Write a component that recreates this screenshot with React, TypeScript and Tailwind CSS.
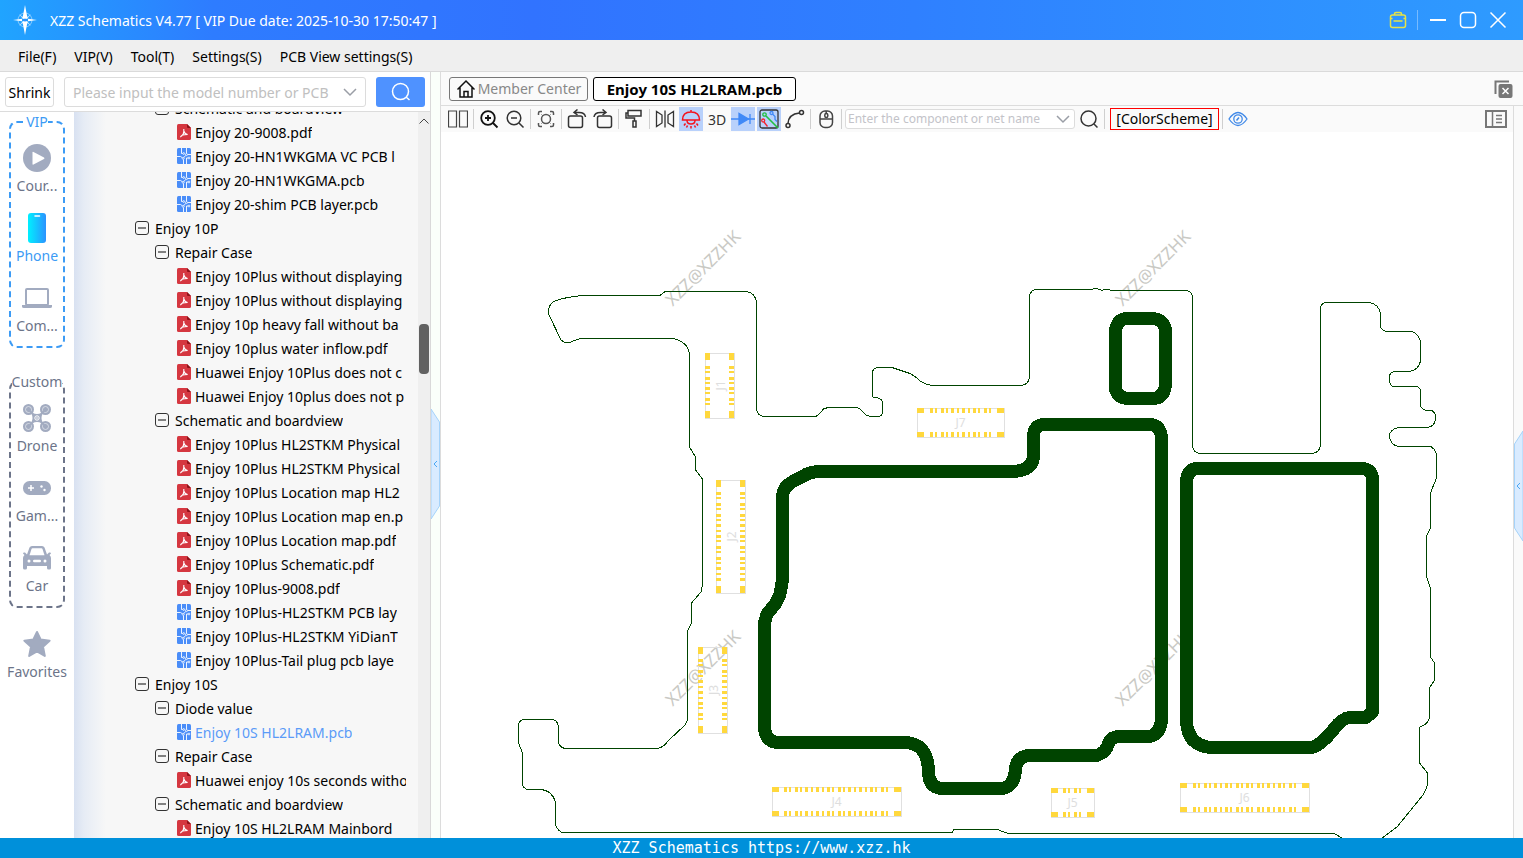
import { useState, type ReactNode } from 'react';
import { clsx } from 'clsx';

type NodeKind = 'folder' | 'pdf' | 'pcb';

interface TreeNode {
  label: string;
  level: 0 | 1 | 2;
  kind: NodeKind;
}

interface Connector {
  name: string;
  x: number;
  y: number;
  w: number;
  h: number;
  pins: number;
  first: number;
  last: number;
}

const MENUS = ['File(F)', 'VIP(V)', 'Tool(T)', 'Settings(S)', 'PCB View settings(S)'];

const TREE: TreeNode[] = [
  { label: 'Schematic and boardview', level: 1, kind: 'folder' },
  { label: 'Enjoy 20-9008.pdf', level: 2, kind: 'pdf' },
  { label: 'Enjoy 20-HN1WKGMA VC PCB l', level: 2, kind: 'pcb' },
  { label: 'Enjoy 20-HN1WKGMA.pcb', level: 2, kind: 'pcb' },
  { label: 'Enjoy 20-shim PCB layer.pcb', level: 2, kind: 'pcb' },
  { label: 'Enjoy 10P', level: 0, kind: 'folder' },
  { label: 'Repair Case', level: 1, kind: 'folder' },
  { label: 'Enjoy 10Plus without displaying', level: 2, kind: 'pdf' },
  { label: 'Enjoy 10Plus without displaying', level: 2, kind: 'pdf' },
  { label: 'Enjoy 10p heavy fall without ba', level: 2, kind: 'pdf' },
  { label: 'Enjoy 10plus water inflow.pdf', level: 2, kind: 'pdf' },
  { label: 'Huawei Enjoy 10Plus does not c', level: 2, kind: 'pdf' },
  { label: 'Huawei Enjoy 10plus does not p', level: 2, kind: 'pdf' },
  { label: 'Schematic and boardview', level: 1, kind: 'folder' },
  { label: 'Enjoy 10Plus HL2STKM Physical', level: 2, kind: 'pdf' },
  { label: 'Enjoy 10Plus HL2STKM Physical', level: 2, kind: 'pdf' },
  { label: 'Enjoy 10Plus Location map HL2', level: 2, kind: 'pdf' },
  { label: 'Enjoy 10Plus Location map en.p', level: 2, kind: 'pdf' },
  { label: 'Enjoy 10Plus Location map.pdf', level: 2, kind: 'pdf' },
  { label: 'Enjoy 10Plus Schematic.pdf', level: 2, kind: 'pdf' },
  { label: 'Enjoy 10Plus-9008.pdf', level: 2, kind: 'pdf' },
  { label: 'Enjoy 10Plus-HL2STKM PCB lay', level: 2, kind: 'pcb' },
  { label: 'Enjoy 10Plus-HL2STKM YiDianT', level: 2, kind: 'pcb' },
  { label: 'Enjoy 10Plus-Tail plug pcb laye', level: 2, kind: 'pcb' },
  { label: 'Enjoy 10S', level: 0, kind: 'folder' },
  { label: 'Diode value', level: 1, kind: 'folder' },
  { label: 'Enjoy 10S HL2LRAM.pcb', level: 2, kind: 'pcb' },
  { label: 'Repair Case', level: 1, kind: 'folder' },
  { label: 'Huawei enjoy 10s seconds witho', level: 2, kind: 'pdf' },
  { label: 'Schematic and boardview', level: 1, kind: 'folder' },
  { label: 'Enjoy 10S HL2LRAM Mainbord', level: 2, kind: 'pdf' },
];

const CONNECTORS: Connector[] = [
  { name: 'J1', x: 705, y: 353, w: 29, h: 65, pins: 8, first: 367, last: 404 },
  { name: 'J2', x: 716, y: 480, w: 29, h: 113, pins: 17, first: 493, last: 579 },
  { name: 'J3', x: 698, y: 647, w: 29, h: 86, pins: 12, first: 660, last: 719 },
  { name: 'J4', x: 772, y: 787, w: 129, h: 29, pins: 20, first: 785, last: 887 },
  { name: 'J5', x: 1051, y: 788, w: 43, h: 29, pins: 4, first: 1064, last: 1080 },
  { name: 'J6', x: 1180, y: 783, w: 129, h: 29, pins: 20, first: 1194, last: 1295 },
  { name: 'J7', x: 917, y: 408, w: 87, h: 29, pins: 12, first: 931, last: 990 },
];

const WATERMARKS = [
  [703, 268],
  [1153, 268],
  [703, 668],
  [1153, 668],
];

const OUTLINE =
  'M582 295.5H660L665 291.5H746Q756 293 756.5 303V410Q758 416 764 416.5H816Q820 414 824 408.5L829 407.5H857Q861 409 866 415L871 416.5H878Q882 416 882.5 413V402Q882 398 873 397L872.5 395V374Q872 369 877 367.5H892L907 372.5Q913 374 920 381Q926 385 932 385.5H1021Q1028 385 1029.5 378V297Q1030 289 1038 289.5H1090L1097 288.5L1102 290.5L1105 289L1113 290.5H1186Q1192 291 1192.5 298V447Q1194 453 1200 453.5H1313Q1320 452 1320.5 445V308Q1321 303 1327 302.5H1369Q1379 304 1380.5 314V327Q1382 331 1387 331.5H1412Q1419 334 1420.5 342V361Q1419 370 1409 371.5H1394Q1389 373 1389.5 378Q1389 386 1394 386.5H1416Q1420 387 1420.5 391V406Q1422 410 1427 410.5H1432Q1436 413 1435.5 419Q1435 426 1428 427.5H1398Q1389 430 1389.5 437Q1391 445 1398 446.5H1431Q1435 449 1436.5 454V478L1432 489L1430.5 493V528L1426.5 536V577L1430.5 588V657L1434.5 663V680L1429.5 688V718Q1427 725 1420 727L1419.5 763L1427.5 773V783Q1427 788 1423 795L1397 827L1381 839M1344 839L1334 833.5H1009L1001 831L998 829.5H954L952 832.5H562Q556 829 555.5 824V802Q552 790 540 789.5H527Q522 787 522.5 783V753L518.5 743V726Q519 720 524 719.5H550Q558 719 558.5 727V743Q560 748 566 748.5H658Q664 747 668 741L685 725L687.5 720V631L691.5 623V603L701 592L702.5 585V479L695.5 470V457L689.5 447V354Q688 342 673 338.5H580L568 343Q564 343 561 340L549 315Q547 307 553 302Q560 298 582 295.5';

const SHIELDS = [
  'M1127 318.5H1153Q1165.5 320 1165.5 332V385Q1164 398 1153 398.5H1127Q1115.5 397 1115 385V332Q1117 319 1127 318.5Z',
  'M820 471.5H1014Q1033 470 1033.5 456V436Q1034 425 1044 424.5H1150Q1160 425 1161.5 437V720Q1160 735 1149 736.5H1119Q1110 737 1108 745Q1106 752 1097 755.5H1030Q1016 756 1015.5 770Q1014 787 1002 788.5H941Q929 787 928.5 772Q928 743 905 742.5H777Q765 741 764.5 727V623L767 614L776 603L780 594L782.5 580V496Q783 487 792 482L806 474.5Q812 471.5 820 471.5Z',
  'M1196 468.5H1364Q1371 470 1372.5 477V712L1366 717.5H1350Q1342 718 1334 729Q1321 745 1312 747.5H1210Q1188 745 1186.5 722V482Q1187 470 1196 468.5Z',
];

function Icon({ size = 20, className, children }: { size?: number; className?: string; children: ReactNode }) {
  return (
    <svg
      width={size}
      height={size}
      viewBox="0 0 20 20"
      fill="none"
      stroke="currentColor"
      strokeWidth="1.5"
      className={clsx('shrink-0', className)}
      aria-hidden="true"
    >
      {children}
    </svg>
  );
}

const ChevronDown = () => (
  <svg width="14" height="14" viewBox="0 0 14 14" fill="none" stroke="#9a9ea6" strokeWidth="1.5" aria-hidden="true">
    <path d="M1 4l6 6 6-6" />
  </svg>
);

function TitleBar() {
  return (
    <header className="flex h-10 shrink-0 items-center bg-[linear-gradient(90deg,#20a4ff_0%,#2e7cff_14%,#3173ff_35%,#2f80ff_60%,#2e9bff_100%)] pr-[15px] pl-3 text-white">
      <svg width="26" height="30" viewBox="0 0 26 30" fill="white" aria-hidden="true">
        <circle cx="13" cy="15" r="7" fill="none" stroke="white" strokeOpacity="0.45" />
        <path d="M13 0l1.500 8 1.200 5.500-2.700.8-2.700-.8L11.500 8zM13 30l1.500-8 1.200-5.500-2.700-.8-2.700.8L11.500 22z" />
        <path d="M1 15l9-1.300v2.600zM25 15l-9-1.300v2.600z" />
        <path d="M7 9l4.500 3.500-1 1zM19 9l-4.500 3.500 1 1zM7 21l4.500-3.500-1-1zM19 21l-4.500-3.500 1-1z" fillOpacity="0.7" />
        <circle cx="13" cy="15" r="1.5" fill="#2e90ff" />
      </svg>
      <h1 className="ml-3 whitespace-pre">XZZ Schematics V4.77 [ VIP Due date: 2025-10-30 17:50:47 ]</h1>
      <div className="ml-auto flex items-center gap-2.5">
        <button type="button" aria-label="Toolbox" className="text-[#e6e346]">
          <svg width="18" height="18" viewBox="0 0 18 18" fill="none" stroke="currentColor" strokeWidth="1.5" aria-hidden="true">
            <rect x="1.5" y="4" width="15" height="12.5" rx="2" />
            <path d="M5.500 4V3q0-1.500 1.500-1.500h4q1.500 0 1.500 1.500v1M1.500 7.500h2M14.500 7.500h2M4.500 10h9" />
          </svg>
        </button>
        <span className="h-5 w-px bg-white/35" />
        <button type="button" aria-label="Minimize">
          <Icon><path d="M2 10h16" strokeWidth="2" /></Icon>
        </button>
        <button type="button" aria-label="Maximize">
          <Icon><rect x="2.5" y="2.5" width="15" height="15" rx="3.5" /></Icon>
        </button>
        <button type="button" aria-label="Close">
          <Icon><path d="M2.500 2.500l15 15M17.500 2.500l-15 15" /></Icon>
        </button>
      </div>
    </header>
  );
}

function MenuBar() {
  return (
    <nav className="flex h-8 shrink-0 items-center gap-[18px] border-b border-[#dadada] bg-[#efefef] px-[18px] pt-0.5">
      {MENUS.map(menu => (
        <button key={menu} type="button" className="whitespace-nowrap">
          {menu}
        </button>
      ))}
    </nav>
  );
}

const CATEGORY_ICONS: Record<string, ReactNode> = {
  course: (
    <svg width="28" height="28" viewBox="0 0 28 28" aria-hidden="true">
      <circle cx="14" cy="14" r="14" fill="#a2abc0" />
      <path d="M9.500 8.500v11.500q0 1 1 .5L21 15q1-.7 0-1.400L10.500 8q-1-.5-1 .5z" fill="#fff" />
    </svg>
  ),
  phone: (
    <svg width="18" height="30" viewBox="0 0 18 30" aria-hidden="true">
      <defs>
        <linearGradient id="phone" x1="0" x2="1">
          <stop offset="0" stopColor="#00f0ff" />
          <stop offset="1" stopColor="#2b93ff" />
        </linearGradient>
      </defs>
      <rect width="18" height="30" rx="3" fill="url(#phone)" />
      <path d="M7 3h4.500" stroke="#fff" strokeWidth="1.5" strokeLinecap="round" />
    </svg>
  ),
  computer: (
    <svg width="30" height="22" viewBox="0 0 30 22" aria-hidden="true">
      <rect x="4" y="2" width="22" height="16" rx="1" fill="none" stroke="#a2abc0" strokeWidth="2" />
      <path d="M0 18h12v1h6v-1h12v1.500q0 1.500-2 1.500H2q-2 0-2-1.500z" fill="#a2abc0" />
    </svg>
  ),
  drone: (
    <svg width="28" height="28" viewBox="0 0 28 28" fill="#a2abc0" aria-hidden="true">
      <circle cx="5.5" cy="5.5" r="5.5" />
      <circle cx="22.5" cy="5.5" r="5.5" />
      <circle cx="5.5" cy="22.5" r="5.5" />
      <circle cx="22.5" cy="22.5" r="5.5" />
      <g fill="none" stroke="#dfe3ea" strokeWidth="0.8">
        <circle cx="5.5" cy="5.5" r="3" />
        <circle cx="22.5" cy="5.5" r="3" />
        <circle cx="5.5" cy="22.5" r="3" />
        <circle cx="22.5" cy="22.5" r="3" />
      </g>
      <path d="M7 5Q9 10 14 10T21 5l2 2Q18.500 9 18.500 14t4.500 7l-2 2Q19 18 14 18T7 23l-2-2Q9.500 19 9.500 14T5 7z" />
      <circle cx="14" cy="14" r="2.2" fill="none" stroke="#fff" strokeWidth="1" />
      <circle cx="14" cy="14" r="0.8" fill="#fff" />
    </svg>
  ),
  game: (
    <svg width="28" height="14" viewBox="0 0 28 14" aria-hidden="true">
      <rect width="28" height="14" rx="6.5" fill="#a2abc0" />
      <path d="M8 4v6M5 7h6" stroke="#fff" strokeWidth="1.5" />
      <circle cx="18.5" cy="5.5" r="1.2" fill="#fff" />
      <circle cx="21.5" cy="9" r="1.2" fill="#fff" />
    </svg>
  ),
  car: (
    <svg width="28" height="24" viewBox="0 0 28 24" aria-hidden="true">
      <path
        d="M6.500 1.500Q7.200 0 9 0h10q1.800 0 2.500 1.500L24 8.500l2-2q2-.5 2 1l-1.500 1.500Q28 10.500 28 12v10q0 1.500-1.500 1.500h-1q-1.500 0-1.500-1.500v-2H4v2q0 1.500-1.500 1.500h-1Q0 23.500 0 22V12q0-1.500 1.500-3L0 7.500q0-1.500 2-1l2 2z"
        fill="#a2abc0"
      />
      <path d="M8.500 3Q8.800 2.300 9.500 2.300h9q.7 0 1 .7l2 6.200h-15z" fill="#fff" />
      <circle cx="6" cy="15" r="1.5" fill="#fff" />
      <circle cx="22" cy="15" r="1.5" fill="#fff" />
      <rect x="10" y="13.8" width="8" height="2.4" rx="1.2" fill="#fff" />
    </svg>
  ),
  star: (
    <svg width="28" height="28" viewBox="0 0 28 28" aria-hidden="true">
      <path
        d="M14 2l3.600 7.500 9 1.200-6.600 6 1.800 9.300-7.800-4.500-7.800 4.500 1.800-9.300-6.600-6 9-1.200z"
        fill="#a2abc0"
        stroke="#a2abc0"
        strokeWidth="2"
        strokeLinejoin="round"
      />
    </svg>
  ),
};

function Category({ icon, label, active }: { icon: string; label: string; active?: boolean }) {
  return (
    <button type="button" className="flex w-full flex-col items-center gap-0.5 pt-2.5 pb-1.5">
      <span className="flex h-8 items-center">{CATEGORY_ICONS[icon]}</span>
      <span className={clsx('h-5 leading-5', active ? 'text-[#3c9bf5]' : 'text-[#6c7489]')}>{label}</span>
    </button>
  );
}

function Sidebar() {
  return (
    <aside className="flex w-[74px] shrink-0 flex-col items-center bg-white">
      <fieldset className="w-14 rounded-lg border-2 border-dashed border-[#3c9bf5] pb-1">
        <legend className="mx-auto h-5 leading-5 text-[#3c9bf5]">VIP</legend>
        <Category icon="course" label="Cour..." />
        <Category icon="phone" label="Phone" active />
        <Category icon="computer" label="Com..." />
      </fieldset>
      <fieldset className="mt-6 mb-2.5 w-14 min-w-0 rounded-lg border-2 border-dashed border-[#6c7489] pb-1">
        <legend className="mx-auto h-5 leading-5 text-[#6c7489]">Custom</legend>
        <Category icon="drone" label="Drone" />
        <Category icon="game" label="Gam..." />
        <Category icon="car" label="Car" />
      </fieldset>
      <Category icon="star" label="Favorites" />
    </aside>
  );
}

function FileIcon({ kind }: { kind: NodeKind }) {
  if (kind === 'folder') {
    return (
      <svg width="14" height="14" viewBox="0 0 14 14" fill="none" stroke="#333" aria-hidden="true">
        <rect x="0.5" y="0.5" width="13" height="13" rx="2.5" />
        <path d="M3 7h8" strokeWidth="1.2" />
      </svg>
    );
  }
  if (kind === 'pdf') {
    return (
      <svg width="14" height="16" viewBox="0 0 14 16" aria-hidden="true">
        <path d="M1.500 0H10l4 4v10.500q0 1.500-1.500 1.500h-11Q0 16 0 14.500v-13Q0 0 1.500 0z" fill="#d53740" />
        <path d="M10 0l4 4h-3q-1 0-1-1z" fill="#8f1219" />
        <path d="M6.800 5v2.500q0 3.500-3 5 .5-1.800 6.800-2Q7.500 9.800 6.800 7" fill="none" stroke="#fff" strokeWidth="1.1" />
      </svg>
    );
  }
  return (
    <svg width="14" height="16" viewBox="0 0 14 16" fill="none" stroke="#fff" aria-hidden="true">
      <rect width="14" height="16" rx="1.5" fill="#4a8df8" stroke="none" />
      <path d="M4.500 0v5.500h1.200M0 8.500h3.500l1.500 1M9.500 0v5.500M10.800 6.500H14M6.500 16v-4.500M9.500 16v-6h1.500M8.500 7.500L7 9.500" strokeWidth="0.9" />
      <circle cx="6.7" cy="5.5" r="0.9" strokeWidth="0.8" />
      <circle cx="9.5" cy="6.6" r="1" strokeWidth="0.8" />
      <circle cx="6.2" cy="10.3" r="1" strokeWidth="0.8" />
      <circle cx="12" cy="10" r="0.9" strokeWidth="0.8" />
    </svg>
  );
}

const LEVEL_PADDING = ['pl-[61px]', 'pl-[81px]', 'pl-[103px]'];

function FileTree() {
  const [selected, setSelected] = useState(26);

  return (
    <div className="flex min-w-0 flex-1 bg-[#f7f7f7] bg-[linear-gradient(90deg,#d8e1f1_0px,#e6ecf5_10px,#f7f7f7_32px)]">
      <ul className="-mt-4 mr-3 min-w-0 flex-1">
        {TREE.map((node, index) => (
          <li key={index}>
            <button
              type="button"
              onClick={() => setSelected(index)}
              className={clsx(
                'flex h-6 w-full items-center overflow-hidden whitespace-nowrap',
                LEVEL_PADDING[node.level],
                node.level === 2 ? 'gap-1' : 'gap-1.5',
                index === selected && 'text-[#5b9bf8]'
              )}
            >
              <span className="shrink-0"><FileIcon kind={node.kind} /></span>
              <span className="min-w-0 overflow-hidden">{node.label}</span>
            </button>
          </li>
        ))}
      </ul>
      <div className="flex w-3 shrink-0 flex-col items-center bg-[#efefef] pt-1.5">
        <svg width="10" height="6" viewBox="0 0 10 6" fill="none" stroke="#444" aria-hidden="true">
          <path d="M0.500 5.500L5 1l4.500 4.500" />
        </svg>
        <div className="mt-50 h-[50px] w-2.5 rounded-[4px] bg-[#616161]" />
      </div>
    </div>
  );
}

function LeftPanel() {
  return (
    <section className="flex w-[431px] shrink-0 flex-col border-r border-[#d9d9d9] bg-white">
      <div className="flex h-10 shrink-0 items-center border-b border-[#dcdcdc] px-[5px] pt-px">
        <button type="button" className="h-[30px] w-[49px] rounded-[3px] border border-[#dcdcdc] bg-white">
          Shrink
        </button>
        <div className="ml-2.5 flex h-[30px] min-w-0 flex-1 items-center rounded-[3px] border border-[#dcdcdc] pr-2 pl-2">
          <input
            type="text"
            aria-label="Model number"
            placeholder="Please input the model number or PCB"
            className="min-w-0 flex-1 outline-none placeholder:text-[#c0c0c0]"
          />
          <ChevronDown />
        </div>
        <button
          type="button"
          aria-label="Search"
          className="ml-2.5 flex h-[30px] w-[49px] items-center justify-center rounded-[3px] bg-[#4f92ff] text-white"
        >
          <Icon>
            <circle cx="9.5" cy="9.5" r="8" />
            <path d="M15 15l3.500 3" />
          </Icon>
        </button>
      </div>
      <div className="flex min-h-0 flex-1 overflow-hidden">
        <Sidebar />
        <FileTree />
      </div>
    </section>
  );
}

function Handle({ side }: { side: 'left' | 'right' }) {
  return (
    <button type="button" aria-label={`Toggle ${side} panel`} className="block">
      <svg width="9" height="110" viewBox="0 0 9 110" aria-hidden="true">
        <path
          d={side === 'left' ? 'M0 0L8.500 13V97L0 110z' : 'M9 0L.5 13V97L9 110z'}
          fill="#d9ebff"
          stroke="#a5d3fa"
        />
        <path d="M6 52L3 55l3 3" fill="none" stroke="#4aa8f5" />
      </svg>
    </button>
  );
}

function ToolButton({ label, active, children }: { label: string; active?: boolean; children: ReactNode }) {
  return (
    <button
      type="button"
      aria-label={label}
      className={clsx('flex h-6 w-6 shrink-0 items-center justify-center text-[#333]', active && 'bg-[#b9d1fb]')}
    >
      {children}
    </button>
  );
}

const Divider = () => <span className="mx-px h-5 w-px shrink-0 bg-[#cfcfcf]" />;

function Toolbar() {
  return (
    <div className="flex h-[26px] shrink-0 items-center gap-0.5 bg-[#fafafa] pr-1.5 pl-[5px]">
      <ToolButton label="Split view">
        <Icon className="text-[#444]">
          <path d="M.5 2h8v16h-8zM11.500 2h8v16h-8z" strokeWidth="1.2" />
        </Icon>
      </ToolButton>
      <Divider />
      <ToolButton label="Zoom in">
        <Icon className="text-[#111]">
          <circle cx="9" cy="9" r="6.8" strokeWidth="1.8" />
          <path d="M14 14l4.500 4.500M9 6v6M6 9h6" strokeWidth="1.8" />
        </Icon>
      </ToolButton>
      <ToolButton label="Zoom out">
        <Icon>
          <circle cx="9" cy="9" r="6.8" />
          <path d="M14 14l4.500 4.500M6 9h6" />
        </Icon>
      </ToolButton>
      <Divider />
      <ToolButton label="Fit to window">
        <Icon className="text-[#555]">
          <circle cx="10" cy="10" r="4.5" />
          <path d="M2.500 6V4q0-1.500 1.500-1.500h2M14 2.500h2q1.500 0 1.500 1.500v2M17.500 14v2q0 1.500-1.500 1.500h-2M6 17.500H4q-1.500 0-1.500-1.500v-2" />
          <path d="M5.500 5.500l1 1M14.500 5.500l-1 1M5.500 14.500l1-1M14.500 14.500l-1-1" strokeWidth="1" />
        </Icon>
      </ToolButton>
      <Divider />
      <ToolButton label="Rotate right">
        <Icon>
          <rect x="1.5" y="7" width="14" height="11.5" rx="2" />
          <path d="M7 3.500h5q6 0 6.500 4.500M10.500.5L7 3.500l3.500 2.500" />
        </Icon>
      </ToolButton>
      <ToolButton label="Rotate left">
        <Icon>
          <rect x="4.500" y="7" width="14" height="11.5" rx="2" />
          <path d="M1 8q.5-4.500 6.500-4.500H13M9.500.5L13 3.500 9.500 6" />
        </Icon>
      </ToolButton>
      <Divider />
      <ToolButton label="Paint">
        <Icon>
          <path d="M4 1.500h13V7H4zM4 4H2v5h8.500v3M9 12h3v6H9z" />
        </Icon>
      </ToolButton>
      <Divider />
      <ToolButton label="Mirror">
        <Icon>
          <path d="M1.500 2.500v15l5.500-3.500V6zM18.500 2.500v15L13 14V6zM10 1.500v17" strokeWidth="1.3" />
        </Icon>
      </ToolButton>
      <ToolButton label="Lamp" active>
        <Icon className="text-[#f5121d]">
          <path d="M1.500 11q0-8 8.500-8t8.500 8zM10 1v2M6 11.500q0 3.500 4 3.500t4-3.500M10 17v2.500M4.500 14.500L3 16.500M15.500 14.500l1.500 2M6.500 16.500l-1 2M13.500 16.500l1 2" />
        </Icon>
      </ToolButton>
      <ToolButton label="3D view">3D</ToolButton>
      <ToolButton label="Diode" active>
        <svg width="24" height="20" viewBox="0 0 24 20" stroke="#4089f7" strokeWidth="1.3" aria-hidden="true">
          <path d="M0 10h24M19 5v10" />
          <path d="M8 4.500v11l9.500-5.500z" fill="#4089f7" />
        </svg>
      </ToolButton>
      <ToolButton label="Net" active>
        <Icon>
          <rect x="1" y="1" width="18" height="18" rx="2" strokeWidth="1.3" />
          <path d="M7 7l12 12" stroke="#22c040" strokeWidth="1.6" />
          <circle cx="5.500" cy="5.500" r="1.7" stroke="#22c040" strokeWidth="1.3" />
          <path d="M13.500 5l2.500 2.500v3l2 2" stroke="#4089f7" strokeWidth="1.3" />
          <circle cx="12.5" cy="4" r="1.5" stroke="#4089f7" strokeWidth="1.3" />
          <path d="M5 13l3.500 4.500" stroke="#f5222d" strokeWidth="1.3" />
          <circle cx="4.2" cy="11.5" r="1.5" stroke="#f5222d" strokeWidth="1.3" />
        </Icon>
      </ToolButton>
      <ToolButton label="Trace">
        <Icon>
          <circle cx="3" cy="16.5" r="2" />
          <circle cx="16.5" cy="3.5" r="2" />
          <path d="M3 14.500Q3.500 5 14.500 4" />
        </Icon>
      </ToolButton>
      <Divider />
      <ToolButton label="Mouse settings">
        <Icon className="text-[#444]">
          <rect x="4" y="2" width="12.5" height="16.5" rx="5" />
          <path d="M4 10h12.500M10.200 2v3" />
          <rect x="8.8" y="4.5" width="3" height="4" rx="1.5" />
        </Icon>
      </ToolButton>
      <Divider />
      <div className="flex h-5 w-[230px] shrink-0 items-center rounded-[3px] border border-[#dcdcdc] bg-white pr-1 pl-0.5">
        <input
          type="text"
          aria-label="Component or net name"
          placeholder="Enter the component or net name"
          className="mr-1 min-w-0 flex-1 text-[12px] outline-none placeholder:text-[#c3c3c9]"
        />
        <ChevronDown />
      </div>
      <ToolButton label="Find">
        <Icon>
          <circle cx="9.5" cy="9.5" r="7.5" />
          <path d="M15 15l3.500 3.500" />
        </Icon>
      </ToolButton>
      <Divider />
      <button type="button" className="ml-0.5 h-[22px] w-[109px] shrink-0 border border-[#f00] leading-5">
        [ColorScheme]
      </button>
      <Divider />
      <ToolButton label="Visibility">
        <Icon className="text-[#4089e8]">
          <path d="M1 10q9-13 18 0q-9 13-18 0z" strokeWidth="1.3" />
          <circle cx="10" cy="10" r="4.2" strokeWidth="1.3" />
          <path d="M8.500 11.500l2.500-3" />
        </Icon>
      </ToolButton>
      <button type="button" aria-label="Layers" className="ml-auto">
        <svg width="22" height="18" viewBox="0 0 22 18" fill="none" stroke="#777" strokeWidth="1.5" aria-hidden="true">
          <path d="M1 1h20v16H1z" strokeWidth="2" />
          <path d="M7.500 1v16M11 5.500h6M11 9h6M11 12.500h6" />
        </svg>
      </button>
    </div>
  );
}

function ConnectorShape({ name, x, y, w, h, pins, first, last }: Connector) {
  const vertical = h > w;
  const start = vertical ? y : x;
  const end = vertical ? y + h : x + w;
  // two rails of pads; on horizontal parts they run left to right
  const near = vertical ? x : y;
  const rails = [near, near + 24];
  const step = (last - first) / (pins - 1);
  const pads = [
    { at: start, size: 7 },
    ...Array.from({ length: pins }, (_, i) => ({ at: Math.round(first + i * step) - 1, size: i % 2 ? 2 : 3 })),
    { at: end - 7, size: 7 },
  ];
  const cx = x + w / 2;
  const cy = y + h / 2;

  return (
    <g>
      <rect x={x + 0.5} y={y + 0.5} width={w} height={h} fill="none" stroke="#e0e0e0" />
      {rails.map(rail =>
        pads.map(pad => (
          <rect
            key={`${rail}-${pad.at}`}
            x={vertical ? rail : pad.at}
            y={vertical ? pad.at : rail}
            width={vertical ? 5 : pad.size}
            height={vertical ? pad.size : 5}
            fill="#ffd83d"
          />
        ))
      )}
      <text
        x={cx}
        y={cy + 4}
        textAnchor="middle"
        fontSize="12"
        fill="#dedede"
        transform={vertical ? `rotate(-90 ${cx} ${cy}) translate(0 1)` : undefined}
      >
        {name}
      </text>
    </g>
  );
}

function BoardView() {
  return (
    <svg
      viewBox="441 132 1072 706"
      preserveAspectRatio="xMidYMid slice"
      className="block h-full w-full bg-white"
      role="img"
      aria-label="Enjoy 10S HL2LRAM board"
    >
      {WATERMARKS.map(([x, y]) => (
        <text
          key={`${x}-${y}`}
          x={x}
          y={y + 6}
          textAnchor="middle"
          fontSize="17"
          fill="#c9c9c4"
          transform={`rotate(-45 ${x} ${y})`}
        >
          XZZ@XZZHK
        </text>
      ))}
      <path d={OUTLINE} fill="none" stroke="#004400" shapeRendering="crispEdges" />
      {SHIELDS.map(d => (
        <path key={d} d={d} fill="none" stroke="#004400" strokeWidth="13" strokeLinejoin="round" shapeRendering="crispEdges" />
      ))}
      {CONNECTORS.map(connector => (
        <ConnectorShape key={connector.name} {...connector} />
      ))}
    </svg>
  );
}

function Workspace() {
  return (
    <main className="flex min-w-0 flex-1 flex-col border-l border-[#dcdcdc] bg-white">
      <div className="flex h-[34px] shrink-0 items-center gap-[5px] border-b border-[#dcdcdc] bg-[#fafafa] pr-2.5 pl-2">
        <button
          type="button"
          className="flex h-6 w-[139px] items-center justify-center gap-0.5 rounded-[3px] border border-[#777] whitespace-nowrap text-[#888]"
        >
          <Icon className="text-[#111]">
            <path d="M1.500 10.500L10 2l8.500 8.500M4 8.500v9.500h12V8.500M8 18v-5.500h4V18" />
          </Icon>
          Member Center
        </button>
        <button
          type="button"
          className="h-6 w-[203px] rounded-[3px] border border-black bg-white text-[15px] leading-5 font-bold whitespace-nowrap"
        >
          Enjoy 10S HL2LRAM.pcb
        </button>
        <button type="button" aria-label="Close all tabs" className="ml-auto">
          <svg width="19" height="18" viewBox="0 0 19 18" aria-hidden="true">
            <path d="M1.500 14V1.500H15" fill="none" stroke="#777" strokeWidth="2" />
            <rect x="4.5" y="4" width="14" height="14" rx="2" fill="#777" />
            <path d="M8.500 8l6 6M14.500 8l-6 6" stroke="#fff" strokeWidth="1.5" />
          </svg>
        </button>
      </div>
      <div className="flex min-h-0 flex-1">
        <div className="flex min-w-0 flex-1 flex-col">
          <Toolbar />
          <div className="min-h-0 flex-1">
            <BoardView />
          </div>
        </div>
        <div className="flex w-2.5 shrink-0 flex-col justify-center border-l border-[#dcdcdc] bg-[#fafafa] pt-7">
          <Handle side="right" />
        </div>
      </div>
    </main>
  );
}

export default function App() {
  return (
    <div className="flex h-screen flex-col overflow-hidden bg-white font-['Noto_Sans','Noto_Sans_CJK_SC',sans-serif] text-[14px] text-black">
      <TitleBar />
      <MenuBar />
      <div className="flex min-h-0 flex-1">
        <LeftPanel />
        <div className="flex w-[9px] shrink-0 flex-col justify-center bg-[#fafffa] pt-[18px]">
          <Handle side="left" />
        </div>
        <Workspace />
      </div>
      <footer className="flex h-5 shrink-0 items-center justify-center bg-[#0090da] font-['DejaVu_Sans_Mono',monospace] text-[15px] whitespace-pre text-white">
        XZZ Schematics https://www.xzz.hk
      </footer>
    </div>
  );
}
